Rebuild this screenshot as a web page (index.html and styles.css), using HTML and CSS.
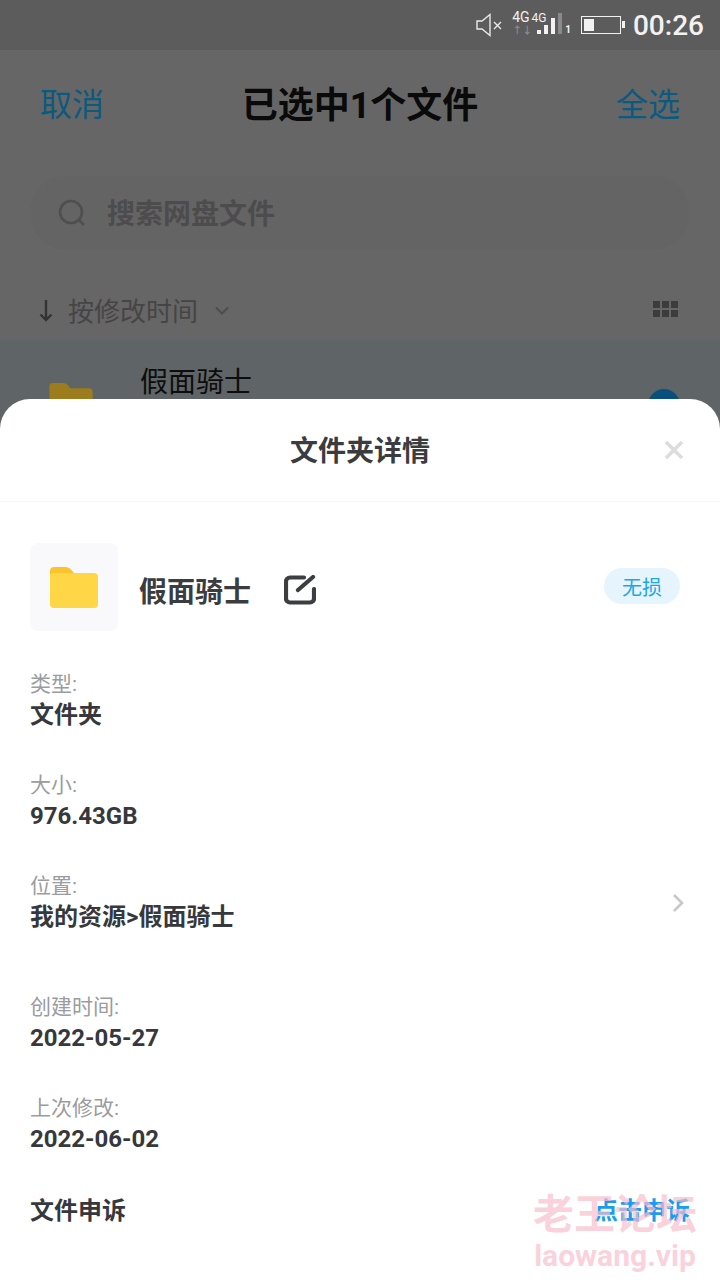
FILE: index.html
```html
<!DOCTYPE html>
<html lang="zh-CN">
<head>
    <meta charset="UTF-8">
    <meta name="viewport" content="width=device-width, initial-scale=1.0">
    <title>文件夹详情</title>
    <link rel="stylesheet" href="styles.css">
</head>
<body>
    <div class="page">
        <div class="status-bar">
            <svg class="mute-icon" width="27" height="24" viewBox="0 0 27 24" fill="none" stroke="#e8e8e8" stroke-width="1.400">
                <path d="M1 8h5l8-6.500v21L6 16H1z"/>
                <path d="M18 9l7 7M25 9l-7 7"/>
            </svg>
            <div class="net">
                <div class="net-labels"><span class="net-big">4G</span><span class="net-small">4G</span></div>
                <div class="net-arrows">↑↓</div>
            </div>
            <div class="signal">
                <i class="sig s1"></i><i class="sig s2"></i><i class="sig s3"></i><i class="sig s4"></i>
            </div>
            <span class="sim">1</span>
            <div class="battery"><div class="battery-fill"></div></div>
            <span class="clock">00:26</span>
        </div>

        <div class="nav-bar">
            <span class="nav-link">取消</span>
            <span class="nav-title">已选中1个文件</span>
            <span class="nav-link">全选</span>
        </div>

        <div class="search">
            <svg width="30" height="30" viewBox="0 0 30 30" fill="none" stroke="#4f4f4f" stroke-width="2.600">
                <circle cx="14" cy="14" r="11"/>
                <path d="M22 22l5 5"/>
            </svg>
            <span class="search-text">搜索网盘文件</span>
        </div>

        <div class="sort-bar">
            <svg class="sort-arrow" width="14" height="22" viewBox="0 0 14 22" fill="none" stroke="#333333" stroke-width="2.400"><path d="M7 0v20M1.500 14.500L7 20l5.500-5.500"/></svg>
            <span class="sort-text">按修改时间</span>
            <svg class="sort-caret" width="14" height="9" viewBox="0 0 14 9" fill="none" stroke="#4d4d4d" stroke-width="2"><path d="M1 1.500l6 6 6-6"/></svg>
            <div class="grid-icon">
                <i></i><i></i><i></i><i></i><i></i><i></i>
            </div>
        </div>

        <div class="file-row">
            <svg class="file-folder" width="44" height="36" viewBox="0 0 48 40"><path d="M0 5a4 4 0 0 1 4-4h12a6 6 0 0 1 5 3l2 3h21a4 4 0 0 1 4 4v25a4 4 0 0 1-4 4H4a4 4 0 0 1-4-4z" fill="#9c7c1c"/></svg>
            <span class="file-name">假面骑士</span>
            <span class="file-check"></span>
        </div>

        <div class="sheet">
            <div class="sheet-head">
                <span class="sheet-title">文件夹详情</span>
                <svg class="sheet-close" width="20" height="20" viewBox="0 0 20 20" stroke="#dcdcdc" stroke-width="3.500"><path d="M2 2l16 16M18 2L2 18"/></svg>
            </div>

            <div class="sheet-file">
                <div class="folder-box">
                    <svg width="48" height="42" viewBox="0 0 48 42">
                        <path d="M0 5a4 4 0 0 1 4-4h12a7 7 0 0 1 5 2.500l3 3.500H4L0 10z" fill="#fcc42c"/>
                        <path d="M0 10a3 3 0 0 1 3-3h41a4 4 0 0 1 4 4v27a4 4 0 0 1-4 4H4a4 4 0 0 1-4-4z" fill="#ffd646"/>
                    </svg>
                </div>
                <span class="sheet-file-name">假面骑士</span>
                <svg class="edit-icon" width="32" height="30" viewBox="0 0 32 30" fill="none" stroke="#3c3e42" stroke-width="4.200" stroke-linecap="round">
                    <path d="M20 2.500H6a4 4 0 0 0-4 4v17a4 4 0 0 0 4 4h20a4 4 0 0 0 4-4V14"/>
                    <path d="M14 15L29 2"/>
                </svg>
                <span class="badge">无损</span>
            </div>

            <div class="info">
                <div class="info-label">类型:</div>
                <div class="info-value">文件夹</div>
            </div>
            <div class="info">
                <div class="info-label">大小:</div>
                <div class="info-value">976.43GB</div>
            </div>
            <div class="info info-tall">
                <div class="info-label">位置:</div>
                <div class="info-value">我的资源&gt;假面骑士</div>
                <svg class="info-more" width="12" height="20" viewBox="0 0 12 20" fill="none" stroke="#c8c8c8" stroke-width="2.600"><path d="M2 2l8 8-8 8"/></svg>
            </div>
            <div class="info">
                <div class="info-label">创建时间:</div>
                <div class="info-value">2022-05-27</div>
            </div>
            <div class="info">
                <div class="info-label">上次修改:</div>
                <div class="info-value">2022-06-02</div>
            </div>
            <div class="appeal">
                <span class="info-value">文件申诉</span>
                <span class="appeal-link">点击申诉</span>
            </div>
        </div>

        <div class="watermark">
            <div class="watermark-cn">老王论坛</div>
            <div class="watermark-en">laowang.vip</div>
        </div>
    </div>
</body>
</html>
```

FILE: styles.css
```css
/* page */
html, body {
    margin: 0;
    padding: 0;
}

body {
    font-family: Roboto, "Noto Sans CJK SC", sans-serif;
}

.page {
    position: relative;
    width: 720px;
    height: 1280px;
    overflow: hidden;
    background-color: #666666;
}

/* status bar */
.status-bar {
    display: flex;
    align-items: center;
    justify-content: flex-end;
    height: 50px;
    padding-right: 16px;
    background-color: #5c5c5c;
    color: #f2f2f2;
}

.mute-icon {
    margin-right: 9px;
}

.net {
    width: 25px;
    margin-top: -4px;
    line-height: 1;
    white-space: nowrap;
}

.net-labels {
    display: flex;
    align-items: baseline;
    gap: 2px;
}

.net-big {
    font-size: 14px;
}

.net-small {
    font-size: 12px;
}

.net-arrows {
    font-size: 10px;
    font-weight: 700;
    color: #8a8a8a;
    margin-top: 2px;
}

.signal {
    display: flex;
    align-items: flex-end;
    align-self: flex-end;
    gap: 3px;
    height: 21px;
    margin-bottom: 16px;
}

.sig {
    width: 4px;
    background-color: #f2f2f2;
}

.s1 { height: 4px; }
.s2 { height: 9px; }
.s3 { height: 16px; }
.s4 { height: 21px; background-color: #8a8a8a; }

.sim {
    align-self: flex-end;
    font-size: 10px;
    font-weight: 700;
    line-height: 8px;
    margin: 0 10px 16px 3px;
}

.battery {
    position: relative;
    box-sizing: border-box;
    width: 40px;
    height: 18px;
    border: 1.500px solid #f2f2f2;
    padding: 2px;
    margin-right: 12px;
}

.battery::after {
    content: "";
    position: absolute;
    top: 4px;
    right: -5px;
    width: 3px;
    height: 7px;
    background-color: #f2f2f2;
}

.battery-fill {
    width: 10px;
    height: 100%;
    background-color: #f2f2f2;
}

.clock {
    font-size: 28px;
    font-weight: 500;
}

/* nav */
.nav-bar {
    display: flex;
    align-items: center;
    justify-content: space-between;
    height: 104px;
    padding: 0 40px;
}

.nav-link {
    font-size: 32px;
    color: #0b5a80;
}

.nav-title {
    font-size: 36px;
    font-weight: 700;
    color: #0a0a0a;
}

/* search */
.search {
    display: flex;
    align-items: center;
    gap: 20px;
    height: 74px;
    margin: 22px 30px 0;
    padding-left: 27px;
    border-radius: 37px;
    background-color: #646464;
}

.search-text {
    margin-top: -2px;
    font-size: 28px;
    font-weight: 700;
    color: #4c4c4c;
}

/* sort */
.sort-bar {
    display: flex;
    align-items: center;
    box-sizing: border-box;
    height: 90px;
    padding: 28px 42px 0 39px;
}

.sort-arrow {
    margin: 3px 15px 0 0;
}

.sort-text {
    font-size: 26px;
    color: #454545;
}

.sort-caret {
    margin: 3px 0 0 17px;
}

.grid-icon {
    display: grid;
    grid-template-columns: repeat(3, 7px);
    gap: 2px;
    margin-left: auto;
}

.grid-icon i {
    height: 7px;
    background-color: #3c3c3c;
}

/* selected row */
.file-row {
    display: flex;
    align-items: flex-start;
    height: 200px;
    padding-left: 49px;
    background-color: #5f6466;
}

.file-folder {
    margin-top: 42px;
}

.file-name {
    margin: 20px 0 0 47px;
    font-size: 28px;
    color: #0d0d0d;
}

.file-check {
    width: 32px;
    height: 32px;
    margin: 49px 40px 0 auto;
    border-radius: 50%;
    background-color: #07507c;
}

/* bottom sheet */
.sheet {
    position: absolute;
    left: 0;
    top: 399px;
    width: 720px;
    height: 881px;
    border-radius: 30px 30px 0 0;
    background-color: #ffffff;
}

.sheet-head {
    position: relative;
    display: flex;
    align-items: center;
    justify-content: center;
    height: 102px;
    border-bottom: 1px solid #f5f6f7;
}

.sheet-title {
    margin-top: -2px;
    font-size: 28px;
    font-weight: 700;
    color: #3a3c40;
}

.sheet-close {
    position: absolute;
    right: 36px;
    top: 41px;
}

.sheet-file {
    display: flex;
    align-items: center;
    height: 88px;
    margin: 41px 40px 0 30px;
}

.folder-box {
    display: flex;
    align-items: center;
    justify-content: center;
    width: 88px;
    height: 88px;
    border-radius: 8px;
    background-color: #f9f9fb;
}

.sheet-file-name {
    margin: 6px 0 0 21px;
    font-size: 28px;
    font-weight: 700;
    color: #3a3c40;
}

.edit-icon {
    margin: 6px 0 0 33px;
}

.badge {
    display: flex;
    align-items: center;
    justify-content: center;
    width: 76px;
    height: 36px;
    margin: 0 0 2px auto;
    border-radius: 18px;
    background-color: #e6f5fd;
    font-size: 20px;
    color: #1ea6ea;
}

.info {
    position: relative;
    height: 101px;
    padding-left: 30px;
}

.sheet-file + .info {
    margin-top: 38px;
}

.info-tall {
    height: 121px;
}

.info-label {
    height: 31px;
    font-size: 21px;
    line-height: 31px;
    color: #9a9c9f;
}

.info-value {
    font-size: 24px;
    font-weight: 700;
    line-height: 31px;
    color: #36383c;
}

.info-more {
    position: absolute;
    right: 36px;
    top: 22px;
}

.appeal {
    display: flex;
    align-items: center;
    justify-content: space-between;
    margin-top: 2px;
    padding: 0 30px;
}

.appeal-link {
    font-size: 24px;
    font-weight: 700;
    line-height: 31px;
    color: #1a9cf0;
}

/* watermark */
.watermark {
    position: absolute;
    left: 533px;
    top: 1190px;
    width: 164px;
    text-align: center;
    color: rgba(248, 190, 205, 0.7);
    font-weight: 700;
    pointer-events: none;
}

.watermark-cn {
    font-size: 41px;
    line-height: 50px;
}

.watermark-en {
    font-size: 30px;
    line-height: 32px;
    white-space: nowrap;
}
```
